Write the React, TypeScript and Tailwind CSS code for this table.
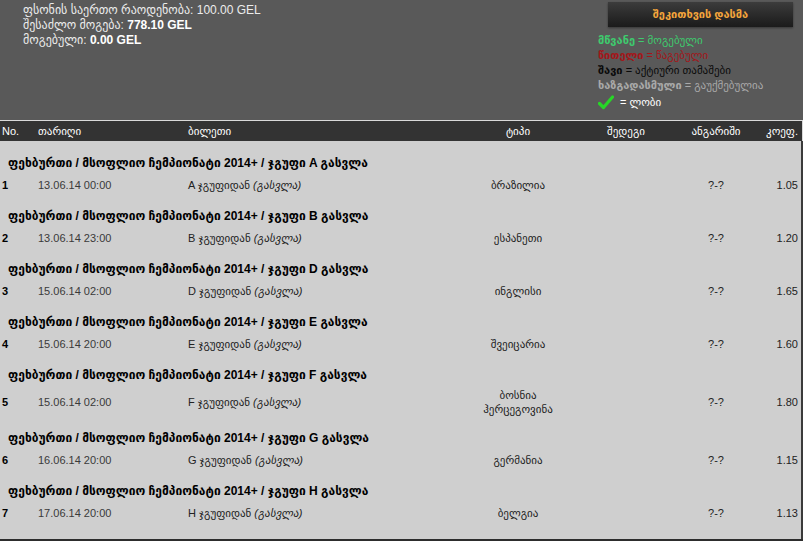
import React from 'react';

// Betslip details: summary on top, bets grouped by event below.

type Bet = {
  no: number;
  date: string;
  group: string;
  pick: string[];
  coef: string;
};

const BETS: Bet[] = [
  { no: 1, date: '13.06.14 00:00', group: 'A', pick: ['ბრაზილია'], coef: '1.05' },
  { no: 2, date: '13.06.14 23:00', group: 'B', pick: ['ესპანეთი'], coef: '1.20' },
  { no: 3, date: '15.06.14 02:00', group: 'D', pick: ['ინგლისი'], coef: '1.65' },
  { no: 4, date: '15.06.14 20:00', group: 'E', pick: ['შვეიცარია'], coef: '1.60' },
  { no: 5, date: '15.06.14 02:00', group: 'F', pick: ['ბოსნია', 'ჰერცეგოვინა'], coef: '1.80' },
  { no: 6, date: '16.06.14 20:00', group: 'G', pick: ['გერმანია'], coef: '1.15' },
  { no: 7, date: '17.06.14 20:00', group: 'H', pick: ['ბელგია'], coef: '1.13' },
];

const FONT = "font-['Liberation_Sans','DejaVu_Sans',sans-serif]";
const COLS = 'grid grid-cols-[36px_150px_252px_156px_80px_80px_42px] items-center';

function Check() {
  return (
    <svg width="16" height="15" viewBox="0 0 16 15" className="shrink-0">
      <path d="M1.5 8.5 L5.5 12.5 L14.5 2" fill="none" stroke="#27d627" strokeWidth="3.2" strokeLinecap="round" strokeLinejoin="round" />
    </svg>
  );
}

function Summary() {
  return (
    <div className="flex h-[120px] justify-between bg-[#595959]">
      <div className="pl-[23px] pt-[3px] text-[12px] leading-[15px] text-[#ececec]">
        <div>ფსონის საერთო რაოდენობა: 100.00 GEL</div>
        <div>
          შესაძლო მოგება: <b className="font-bold text-white">778.10 GEL</b>
        </div>
        <div>
          მოგებული: <b className="font-bold text-white">0.00 GEL</b>
        </div>
      </div>
      <div className="w-[205px] pt-[2px]">
        <button className="ml-[10px] flex h-[25px] w-[185px] items-center justify-center bg-gradient-to-b from-[#3c3c3c] to-[#1b1b1b] text-[11px] font-bold text-[#f4a53c] shadow-[0_1px_2px_rgba(0,0,0,0.4)]">
          შეკითხვის დასმა
        </button>
        <div className="mt-[6px] text-[11px] leading-[15px]">
          <div className="text-[#3ecb6e]">
            <b>მწვანე</b> = მოგებული
          </div>
          <div className="text-[#a3161a]">
            <b>წითელი</b> = წაგებული
          </div>
          <div className="text-[#0a0a0a]">
            <b>შავი</b> = აქტიური თამაშები
          </div>
          <div className="text-[#a9a9a9]">
            <b>ხაზგადასმული</b> = გაუქმებულია
          </div>
          <div className="mt-[2px] flex items-center gap-[6px] text-white">
            <Check />
            <span>= ლობი</span>
          </div>
        </div>
      </div>
    </div>
  );
}

function Header() {
  return (
    <div className={`${COLS} h-[21px] border-t border-r border-[#d9d9d9] bg-[#333333] pl-[2px] text-[11px] text-white`}>
      <div>No.</div>
      <div>თარიღი</div>
      <div>ბილეთი</div>
      <div className="text-center">ტიპი</div>
      <div className="pr-[20px] text-center">შედეგი</div>
      <div className="text-center">ანგარიში</div>
      <div className="whitespace-nowrap text-right">კოეფ.</div>
    </div>
  );
}

function BetBlock({ bet }: { bet: Bet }) {
  return (
    <div className="pt-[13px]">
      <div className="h-[18px] pl-[8px] text-[12px] font-bold leading-[18px] text-black">
        ფეხბურთი / მსოფლიო ჩემპიონატი 2014+ / ჯგუფი {bet.group} გასვლა
      </div>
      <div className={`${COLS} mt-[4px] min-h-[18px] pl-[2px] text-[11px] leading-[14px] text-[#222]`}>
        <div className="font-bold text-black">{bet.no}</div>
        <div className="text-[#3a3a3a]">{bet.date}</div>
        <div>
          {bet.group} ჯგუფიდან <i className="italic">(გასვლა)</i>
        </div>
        <div className="text-center">
          {bet.pick.map((p) => (
            <div key={p}>{p}</div>
          ))}
        </div>
        <div />
        <div className="text-center">?-?</div>
        <div className="text-right">{bet.coef}</div>
      </div>
    </div>
  );
}

export default function App() {
  return (
    <div className={`${FONT} h-[541px] w-[803px] overflow-hidden bg-[#2d2d2d]`}>
      <Summary />
      <Header />
      <div className="border-r-2 border-[#3a3a3a] bg-[#cfcfcf] pb-[17px]">
        {BETS.map((b) => (
          <BetBlock key={b.no} bet={b} />
        ))}
      </div>
    </div>
  );
}
